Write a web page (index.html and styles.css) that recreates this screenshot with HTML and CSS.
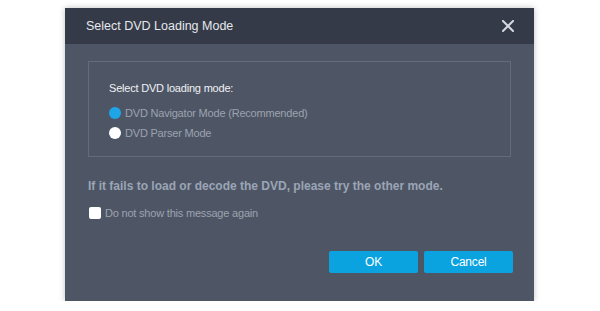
FILE: index.html
```html
<!DOCTYPE html>
<html>
<head>
<meta charset="utf-8">
<link rel="stylesheet" href="styles.css">
</head>
<body>
<div class="dialog">
  <div class="header">
    <span class="title">Select DVD Loading Mode</span>
    <svg class="close" width="12" height="12" viewBox="0 0 12 12"><path d="M1 1L11 11M11 1L1 11" stroke="#d5d9df" stroke-width="2" stroke-linecap="square"/></svg>
  </div>
  <div class="body">
    <div class="box">
      <div class="box-title">Select DVD loading mode:</div>
      <div class="radio"><span class="dot dot-on"></span><span>DVD Navigator Mode (Recommended)</span></div>
      <div class="radio"><span class="dot"></span><span>DVD Parser Mode</span></div>
    </div>
    <div class="warn">If it fails to load or decode the DVD, please try the other mode.</div>
    <div class="check"><span class="cb"></span><span>Do not show this message again</span></div>
    <div class="buttons">
      <button class="btn">OK</button>
      <button class="btn">Cancel</button>
    </div>
  </div>
</div>
</body>
</html>
```
FILE: styles.css
```css
html, body { margin: 0; padding: 0; background: #fff; }
body { font-family: "Liberation Sans", Arial, sans-serif; font-size: 11px; letter-spacing: -0.2px; }
.dialog {
  margin: 8px 0 0 65px;
  width: 469px;
  height: 293px;
  background: #4e5666;
  box-shadow: 0 0 6px rgba(0,0,0,0.25);
  display: flex;
  flex-direction: column;
}
.header {
  height: 36px;
  background: #343a47;
  display: flex;
  align-items: center;
  justify-content: space-between;
  padding: 0 20px 0 21px;
}
.title { color: #e6e8ec; font-size: 12.5px; letter-spacing: 0; }
.close { display: block; }
.body { padding: 17px 21px 0 23px; display: flex; flex-direction: column; }
.box {
  border: 1px solid #646c7b;
  height: 94px;
  padding: 0 20px;
  margin-right: 2px;
  box-sizing: content-box;
}
.box-title { color: #f0f1f3; margin-top: 19px; height: 22px; line-height: 14px; }
.radio { display: flex; align-items: center; height: 20px; color: #9ca3ae; }
.dot { width: 12px; height: 12px; border-radius: 50%; background: #fff; margin: 0 4px 0 0; }
.dot-on { background: #1ea5e8; }
.warn { color: #9ba5b5; font-weight: bold; font-size: 12px; letter-spacing: 0; margin-top: 21px; line-height: 16px; }
.check { display: flex; align-items: center; color: #9ca3ae; margin-top: 11px; line-height: 16px; }
.cb { width: 12px; height: 12px; background: #fff; border-radius: 2px; margin: 0 4px 0 1px; }
.buttons { display: flex; justify-content: flex-end; gap: 6px; margin-top: 30px; }
.btn {
  width: 89px; height: 22px; border: 0; border-radius: 2px;
  background: #0aa3e0; color: #fff; font: inherit; font-size: 12px; letter-spacing: -0.2px; padding: 0;
}
```
